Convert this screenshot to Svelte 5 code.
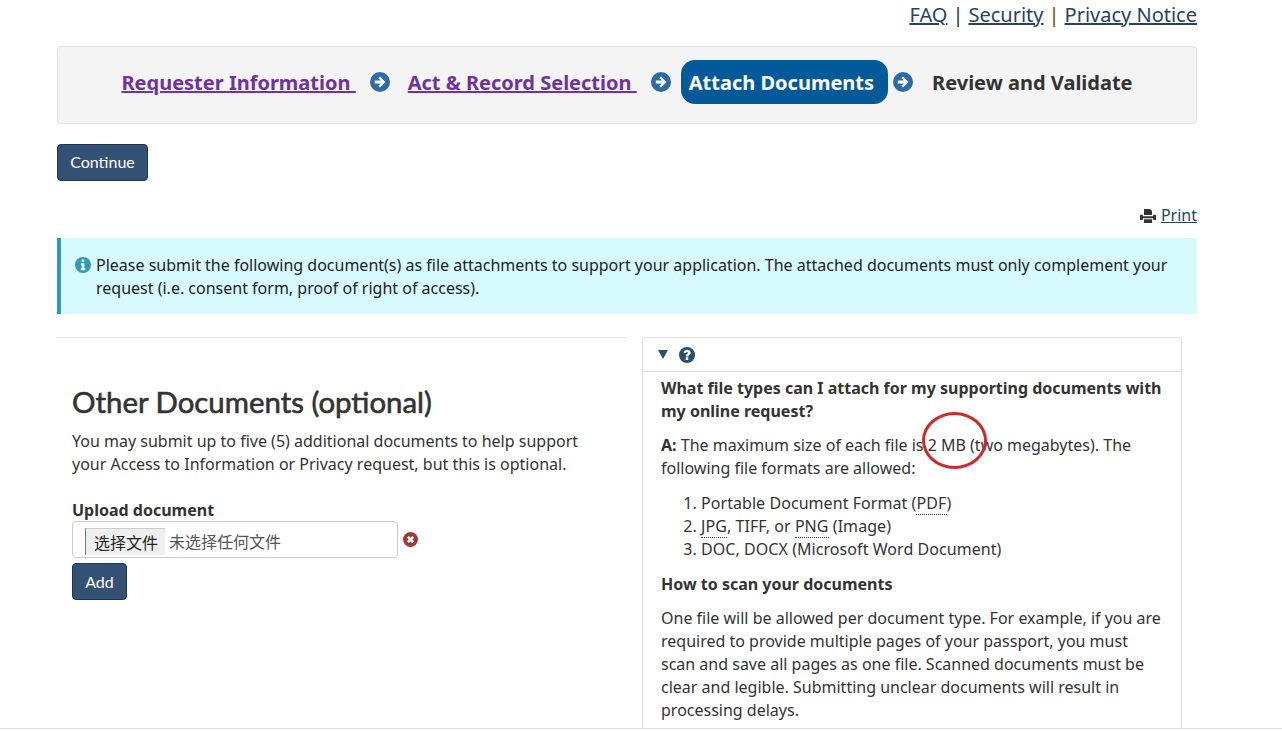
<script lang="ts">
  const steps = [
    { label: "Requester Information", state: "done" },
    { label: "Act & Record Selection", state: "done" },
    { label: "Attach Documents", state: "active" },
    { label: "Review and Validate", state: "todo" },
  ];
</script>

{#snippet arrow()}
  <svg class="arrow" viewBox="0 0 20 20" aria-hidden="true">
    <circle cx="10" cy="10" r="10" fill="#2b6ca8" />
    <path d="M10 4.6 15.4 10 10 15.4 8.4 13.8 10.9 11.4H4.8V8.6H10.9L8.4 6.2Z" fill="#fff" />
  </svg>
{/snippet}

<div class="page">
  <div class="wrap">
    <nav class="top">
      <a href="#faq">FAQ</a><span class="sep">|</span><a href="#security">Security</a><span class="sep alt">|</span><a href="#privacy">Privacy Notice</a>
    </nav>

    <div class="steps">
      {#each steps as step, i}
        {#if step.state === "done"}
          <a class="step done" href="#step">{step.label}&nbsp;</a>
        {:else if step.state === "active"}
          <span class="step active">{step.label}</span>
        {:else}
          <span class="step todo">{step.label}</span>
        {/if}
        {#if i < steps.length - 1}
          {@render arrow()}
        {/if}
      {/each}
    </div>

    <button class="btn continue">Continue</button>

    <div class="print">
      <svg viewBox="0 0 18 16" aria-hidden="true">
        <path d="M4.5 0H11L13.5 2.5V7H4.5ZM0 7.5Q0 6.5 1 6.5H3.2V8.4H14.8V6.5H17Q18 6.5 18 7.5V12.6H14.8V10.6H3.2V12.6H0ZM4.4 11.6H13.6V16H4.4Z" fill="#333" />
      </svg>
      <a href="#print">Print</a>
    </div>

    <div class="alert">
      <svg class="info" viewBox="0 0 16 16" aria-hidden="true">
        <circle cx="8" cy="8" r="8" fill="#2e9ab8" />
        <path d="M6.7 2.6H9.3V4.9H6.7ZM5.8 6.3H9.3V11.2H10.3V13.3H5.8V11.2H6.8V8.3H5.8Z" fill="#fff" />
      </svg>
      <p>Please submit the following document(s) as file attachments to support your application. The attached documents must only complement your request (i.e. consent form, proof of right of access).</p>
    </div>

    <div class="columns">
      <section class="left">
        <h2>Other Documents (optional)</h2>
        <p class="intro">You may submit up to five (5) additional documents to help support your Access to Information or Privacy request, but this is optional.</p>
        <div class="label">Upload document</div>
        <div class="upload">
          <div class="file">
            <span class="choose">选择文件</span>
            <span class="none">未选择任何文件</span>
          </div>
          <svg class="remove" viewBox="0 0 16 16" aria-hidden="true">
            <circle cx="8" cy="8" r="8" fill="#a03a35" />
            <path d="M4.2 6.2 6.2 4.2 8 6 9.8 4.2 11.8 6.2 10 8 11.8 9.8 9.8 11.8 8 10 6.2 11.8 4.2 9.8 6 8Z" fill="#fff" />
          </svg>
        </div>
        <button class="btn add">Add</button>
      </section>

      <aside class="help">
        <div class="help-head">
          <span class="tri"></span>
          <svg class="q" viewBox="0 0 16 16" aria-hidden="true">
            <circle cx="8" cy="8" r="8" fill="#284e72" />
            <path d="M4.6 5.9C4.8 3.8 6.3 2.7 8.2 2.7 10.1 2.7 11.7 3.9 11.7 5.7 11.7 7.1 10.8 7.7 10 8.2 9.4 8.6 9.3 8.8 9.3 9.5H6.7C6.7 8.1 7.1 7.5 8 6.9 8.7 6.5 9 6.2 9 5.7 9 5.3 8.6 5 8.1 5 7.6 5 7.2 5.4 7.1 6.1ZM6.7 10.2H9.3V12.9H6.7Z" fill="#fff" />
          </svg>
        </div>
        <div class="help-body">
          <p class="strong tight">What file types can I attach for my supporting documents with my online request?</p>
          <p><strong>A:</strong> The maximum size of each file is 2 MB (two megabytes). The following file formats are allowed:</p>
          <ol>
            <li>Portable Document Format (<abbr>PDF</abbr>)</li>
            <li><abbr>JPG</abbr>, TIFF, or <abbr>PNG</abbr> (Image)</li>
            <li>DOC, DOCX (Microsoft Word Document)</li>
          </ol>
          <p class="strong tight">How to scan your documents</p>
          <p>One file will be allowed per document type. For example, if you are required to provide multiple pages of your passport, you must scan and save all pages as one file. Scanned documents must be clear and legible. Submitting unclear documents will result in processing delays.</p>
        </div>
        <span class="ring"></span>
      </aside>
    </div>
  </div>
</div>

<style>
  :global(body) {
    margin: 0;
    background: #fff;
  }

  .page {
    height: 728px;
    overflow: hidden;
    border-bottom: 1px solid #ddd;
    font-family: "Noto Sans", "Noto Sans CJK SC", sans-serif;
    font-size: 16px;
    line-height: 23px;
    color: #333;
  }

  .wrap {
    width: 1140px;
    margin-left: 57px;
  }

  .top {
    display: flex;
    justify-content: flex-end;
    align-items: center;
    gap: 5px;
    height: 28px;
    font-size: 20px;
    margin-bottom: 18px;
  }

  .top a,
  .print a {
    color: #284263;
  }

  .sep {
    color: #333;
  }

  .sep.alt {
    color: #5c4a2a;
  }

  .steps {
    box-sizing: border-box;
    height: 78px;
    display: flex;
    align-items: center;
    justify-content: center;
    gap: 8px;
    padding-bottom: 6px;
    background: #f4f4f4;
    border: 1px solid #e3e3e3;
    border-radius: 4px;
    font-size: 20px;
    font-weight: 700;
  }

  .step {
    padding: 2px 8px 0;
    line-height: 42px;
  }

  .done {
    color: #6f32a0;
  }

  .active {
    padding-right: 14px;
    background: #035a9b;
    color: #fff;
    border-radius: 14px;
  }

  .todo {
    color: #333;
  }

  .arrow {
    width: 20px;
    height: 20px;
    margin-left: -2px;
    margin-right: 2px;
    flex-shrink: 0;
  }

  .active + .arrow {
    margin-left: -3px;
    margin-right: 3px;
  }

  .btn {
    display: block;
    background: #335075;
    color: #fff;
    border: 1px solid #1f3651;
    border-radius: 4px;
    font-family: Lato, sans-serif;
    font-size: 16px;
    line-height: 23px;
  }

  .continue {
    margin-top: 20px;
    width: 91px;
    height: 37px;
    padding: 0 0 2px;
  }

  .print {
    display: flex;
    justify-content: flex-end;
    align-items: center;
    gap: 5px;
    margin-top: 23px;
    height: 23px;
  }

  .print svg {
    width: 16px;
    height: 16px;
  }

  .alert {
    box-sizing: border-box;
    display: flex;
    gap: 5px;
    height: 76px;
    margin-top: 11px;
    padding: 16px 24px 0 14px;
    background: #d6faff;
    border-left: 4px solid #2e9ab8;
    color: #222;
  }

  .alert p {
    margin: 0;
  }

  .info {
    width: 16px;
    height: 16px;
    margin-top: 3px;
    flex-shrink: 0;
  }

  .columns {
    display: flex;
    align-items: flex-start;
    gap: 15px;
    margin-top: 23px;
  }

  .left {
    box-sizing: border-box;
    width: 570px;
    padding: 46px 15px 0;
    border-top: 1px solid #e5e5e5;
  }

  h2 {
    margin: 0;
    font-family: Lato, sans-serif;
    font-size: 29.4px;
    font-weight: 400;
    line-height: 36px;
    -webkit-text-stroke: 0.6px #333;
  }

  .intro {
    margin: 10px 0 0;
    max-width: 520px;
  }

  .label {
    margin-top: 23px;
    font-weight: 700;
    line-height: 22px;
  }

  .upload {
    display: flex;
    align-items: center;
    gap: 5px;
  }

  .file {
    box-sizing: border-box;
    display: flex;
    align-items: flex-end;
    gap: 4px;
    width: 326px;
    height: 37px;
    padding: 0 0 2px 12px;
    border: 1px solid #ccc;
    border-radius: 4px;
    overflow: hidden;
  }

  .choose {
    box-sizing: border-box;
    width: 80px;
    height: 27px;
    padding: 3px 0 0 8px;
    background: #efefef;
    border-left: 1px solid #777;
    border-top: 1px solid #ccc;
    color: #222;
  }

  .none {
    padding-bottom: 1px;
    color: #555;
  }

  .remove {
    width: 15px;
    height: 15px;
  }

  .add {
    margin-top: 5px;
    width: 55px;
    height: 37px;
    padding: 0 0 1px;
  }

  .help {
    position: relative;
    box-sizing: border-box;
    width: 540px;
    border: 1px solid #ddd;
    border-radius: 4px;
  }

  .help-head {
    display: flex;
    align-items: center;
    gap: 11px;
    height: 33px;
    padding-left: 15px;
    border-bottom: 1px solid #ddd;
  }

  .tri {
    width: 0;
    height: 0;
    border-left: 5.5px solid transparent;
    border-right: 5.5px solid transparent;
    border-top: 9px solid #284e72;
  }

  .q {
    width: 16px;
    height: 16px;
  }

  .help-body {
    padding: 5px 18px 0;
  }

  .help-body p {
    margin: 0 0 12px;
  }

  .help-body p.tight {
    margin-bottom: 11px;
  }

  .strong {
    font-weight: 700;
  }

  ol {
    margin: 0 0 12px;
    padding-left: 40px;
    letter-spacing: 0.06px;
  }

  abbr {
    border-bottom: 1px dotted #333;
  }

  .ring {
    position: absolute;
    left: 279px;
    top: 74px;
    width: 59px;
    height: 51px;
    border: 3px solid #cf2a27;
    border-radius: 50%;
  }
</style>
